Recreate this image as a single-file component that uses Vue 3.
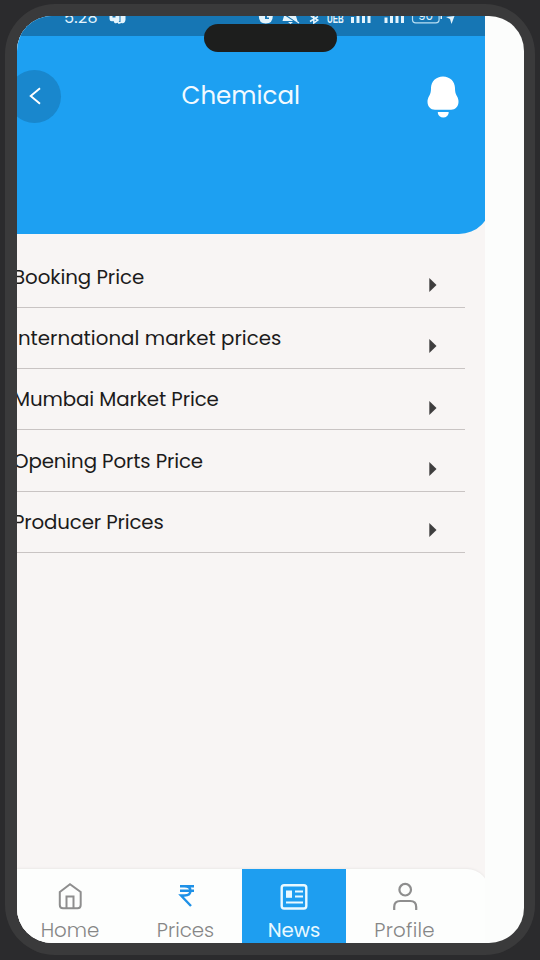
<script setup>
const rows = [
  { label: 'Booking Price', spacing: -0.05 },
  { label: 'International market prices', spacing: 0.03 },
  { label: 'Mumbai Market Price', spacing: -0.1 },
  { label: 'Opening Ports Price', spacing: -0.12 },
  { label: 'Producer Prices', spacing: -0.14 },
]
</script>

<template>
  <div class="device">
    <div class="bezel">
      <main class="screen">
        <div class="app">
          <header class="header">
            <div class="status">
              <span class="time">5:28</span>
              <svg class="status-icons" width="468" height="20" viewBox="17 16 468 20" fill="#e4f4fc">
                <path d="M109.500 16h10v5q-2 3-5 2l-1-2q-4 1-4-2z" />
                <path d="M120.500 16h5v4q-1 4-4 3l-3 1-1-2h3z" />
                <path d="M112.500 16h3v1.500h-3z" fill="#1976b2" />
                <path d="M258.800 16h14q0 7.500-7 7.500t-7-7.500zM265 16v3h4v-1.500h-2V16z" fill-rule="evenodd" />
                <path d="M284 16h12l1.500 5h-15zM288 22h5l-2.500 2z" />
                <path d="M284 14l15 10" stroke="#1976b2" stroke-width="1.500" />
                <path d="M286 14l13 9" stroke="#e4f4fc" stroke-width="1.200" />
                <path d="M310 21.500l8-5M313.800 15v8l4-3-7-4" fill="none" stroke="#e4f4fc" stroke-width="1.500" />
                <path d="M351 17h3v6h-3zM356.500 16h3v7h-3zM362 16h3v7h-3zM367.500 16h3v7h-3zM384.500 17.500h3V23h-3zM390 16h3v7h-3zM395.500 16h3v7h-3zM401 16h3v7h-3z" />
                <path d="M412.500 16v3.500q0 3.300 3.300 3.300h20q3.300 0 3.300-3.300V16" fill="none" stroke="#b9dff3" stroke-width="1.200" />
                <path d="M440.500 16h1.500v3h-1.500zM446 17l8.500-1-3 8-1.500-5z" />
              </svg>
              <span class="signal">UEB</span>
              <span class="battery">90</span>
            </div>
            <div class="toolbar">
              <button class="back" aria-label="Back">
                <svg width="14" height="20" viewBox="0 0 14 20"><path d="M12 2.200 2.700 10l9.300 7.800" fill="none" stroke="#fff" stroke-width="1.900" /></svg>
              </button>
              <h1>Chemical</h1>
              <svg class="bell" width="32" height="42" viewBox="0 0 32 42" fill="#fff">
                <path d="M16 .5C9 .5 4.100 5.500 4 12c0 3.500-.4 5.500-1.700 7.800C1 22 .400 23.900.500 26c.2 4.600 3.100 7.700 7.400 7.700h16.200c4.300 0 7.200-3.100 7.400-7.700.1-2.100-.5-4-1.800-6.200C28.400 17.500 28 15.500 28 12 27.900 5.500 23 .5 16 .5z" />
                <path d="M11.300 36h9.900q.8 0 .5.900c-.7 2.900-2.400 4.500-5.400 4.500s-4.900-1.600-5.500-4.500q-.2-.9.500-.9z" />
              </svg>
            </div>
          </header>
          <ul class="list">
            <li v-for="row in rows" :key="row.label">
              <span :style="{ letterSpacing: row.spacing + 'px' }">{{ row.label }}</span>
              <svg width="8" height="14" viewBox="0 0 8 14"><path d="M.3 0l7.200 7L.3 14z" fill="#3f3e3e" /></svg>
            </li>
          </ul>
          <nav class="nav">
            <a class="home">
              <svg width="30" height="30" viewBox="0 0 30 30" fill="none" stroke="#8e8e8e" stroke-width="2"><path d="M4.800 11 15 3.300 25.700 11v13q0 3.200-3.200 3.200H8q-3.200 0-3.200-3.200zM11.500 27V15.500h7V27" /></svg>
              <span>Home</span>
            </a>
            <a class="prices">
              <svg width="30" height="30" viewBox="0 0 30 30" fill="none" stroke="#1f91e7" stroke-width="2.400"><path d="M9 5.200h14M9 9.800h14M9 5.200h4.500c4 0 6 1.700 6 4.600s-2 4.700-6 4.700H10L20 25" /></svg>
              <span>Prices</span>
            </a>
            <a class="news">
              <svg width="30" height="30" viewBox="0 0 30 30" fill="none" stroke="#e9f9ff" stroke-width="2.400"><rect x="2.700" y="4.200" width="24.600" height="23.300" rx="2.500" /><path d="M16 10.500h8M16 15.500h8M7 21.500h17" stroke-width="2.200" /><path d="M7 9.500h6v7.300H7z" fill="#e9f9ff" stroke="none" /></svg>
              <span>News</span>
            </a>
            <a class="profile">
              <svg width="30" height="30" viewBox="0 0 30 30" fill="none" stroke="#8e8e8e" stroke-width="2.200"><circle cx="15.200" cy="8.700" r="5.800" /><path d="M4.200 29v-3q0-6 6-6h10q6 0 6 6v3" /></svg>
              <span>Profile</span>
            </a>
          </nav>
        </div>
      </main>
      <div class="island"></div>
    </div>
  </div>
</template>

<style>
body { margin: 0; background: #2b2b2d; }
</style>

<style scoped>
* { box-sizing: border-box; }
.device {
  width: 540px;
  height: 960px;
  padding: 4px 5px 5px;
  background: #2b2b2d;
  overflow: hidden;
  font-family: Poppins, Inter, sans-serif;
}
.bezel {
  position: relative;
  height: 951px;
  padding: 12px 11px 12px 12px;
  border-radius: 50px;
  background: #3a3a3b;
}
.screen {
  height: 927px;
  border-radius: 35px;
  background: #fcfdfc;
  overflow: hidden;
}
.app {
  display: flex;
  flex-direction: column;
  width: 468px;
  height: 100%;
  background: #f8f5f4;
  overflow: hidden;
}
.header {
  width: 474px;
  height: 218px;
  background: #1da0f2;
  border-radius: 0 0 32px 0;
  overflow: hidden;
}
.status {
  position: relative;
  height: 20px;
  background: #1676b4;
  overflow: hidden;
  color: #e4f4fc;
}
.status-icons { display: block; }
.time, .signal, .battery { position: absolute; line-height: 1; }
.time { left: 47px; top: -6px; font-size: 16px; letter-spacing: .3px; }
.signal { left: 310px; top: -3px; font: 700 12px/1 "Liberation Sans", sans-serif; transform: scaleX(.66); transform-origin: 0 0; }
.battery { left: 401px; top: -6px; font-size: 12px; }
.toolbar {
  display: flex;
  align-items: center;
  height: 120px;
}
.back {
  display: flex;
  align-items: center;
  width: 53px;
  height: 53px;
  margin-left: -9px;
  padding: 0 0 0 20px;
  border: 0;
  border-radius: 50%;
  background: #1987cd;
}
h1 {
  width: 130px;
  margin: -1px 0 0 120.500px;
  color: #f2faff;
  font-size: 24.500px;
  font-weight: 400;
  line-height: 40px;
  white-space: nowrap;
}
.bell { margin: 2px 0 0 115.500px; }
.list {
  flex: 1;
  margin: 0;
  padding: 12.500px 20px 0 0;
  list-style: none;
}
li {
  display: flex;
  align-items: center;
  justify-content: space-between;
  height: 61.300px;
  padding: 0 28px 0 0;
  border-bottom: 1.500px solid #c9c4c3;
  color: #1c1b1b;
  font-size: 19.800px;
  white-space: nowrap;
}
li span { margin-left: -4px; }
li svg { margin-top: 17px; }
.nav {
  display: grid;
  grid-template-columns: 106px 119px 104px 1fr;
  width: 472px;
  height: 74px;
  border-radius: 0 22px 0 0;
  background: #fdfefd;
  box-shadow: 0 -1px 2px #ece9e8;
}
.nav a {
  display: flex;
  flex-direction: column;
  align-items: center;
  padding-top: 12px;
  color: #868686;
  font-size: 19.800px;
  font-weight: 300;
  line-height: 38px;
}
.nav svg { flex: none; }
.nav .prices { padding-left: 6px; }
.nav .news { background: #1e9ef0; color: #e9f9ff; font-weight: 400; }
.nav .profile { padding-right: 26px; letter-spacing: .25px; }
.island {
  position: absolute;
  left: 199px;
  top: 20px;
  width: 133px;
  height: 28px;
  border-radius: 14px;
  background: #1d1e1d;
}
</style>
